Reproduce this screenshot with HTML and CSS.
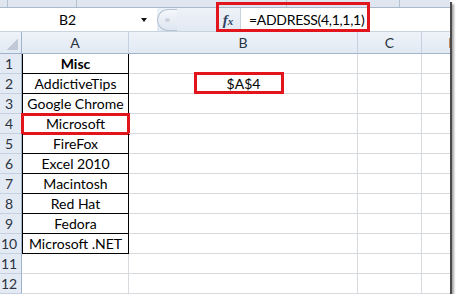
FILE: index.html
```html
<!DOCTYPE html>
<html>
<head>
<meta charset="utf-8">
<link rel="stylesheet" href="styles.css">
</head>
<body>
<div class="win">
  <div class="ribbon">
    <span class="rseg w8"></span>
    <span class="rseg w69"></span>
    <span class="rseg w210"></span>
    <span class="rseg w113"></span>
    <span class="rseg last"></span>
  </div>
  <div class="fbar">
    <div class="namebox">
      <span class="nb-text">B2</span>
      <span class="nb-arrow"></span>
    </div>
    <div class="grip"><span class="grip-cap"><span class="grip-dot"></span></span></div>
    <div class="fx"><span class="fx-f">f</span><span class="fx-x">x</span></div>
    <div class="finput">=ADDRESS(4,1,1,1)</div>
  </div>
  <div class="sheet">
    <div class="corner"><span class="tri"></span></div>
    <div class="ch">A</div>
    <div class="ch">B</div>
    <div class="ch">C</div>
    <div class="ch">D</div>

    <div class="rh">1</div><div class="c t first b">Misc</div><div class="c"></div><div class="c"></div><div class="c"></div>
    <div class="rh">2</div><div class="c t">AddictiveTips</div><div class="c"></div><div class="c"></div><div class="c"></div>
    <div class="rh">3</div><div class="c t">Google Chrome</div><div class="c"></div><div class="c"></div><div class="c"></div>
    <div class="rh">4</div><div class="c t mark">Microsoft</div><div class="c"></div><div class="c"></div><div class="c"></div>
    <div class="rh">5</div><div class="c t">FireFox</div><div class="c"></div><div class="c"></div><div class="c"></div>
    <div class="rh">6</div><div class="c t">Excel 2010</div><div class="c"></div><div class="c"></div><div class="c"></div>
    <div class="rh">7</div><div class="c t">Macintosh</div><div class="c"></div><div class="c"></div><div class="c"></div>
    <div class="rh">8</div><div class="c t">Red Hat</div><div class="c"></div><div class="c"></div><div class="c"></div>
    <div class="rh">9</div><div class="c t">Fedora</div><div class="c"></div><div class="c"></div><div class="c"></div>
    <div class="rh">10</div><div class="c t">Microsoft .NET</div><div class="c"></div><div class="c"></div><div class="c"></div>
    <div class="rh">11</div><div class="c"></div><div class="c"></div><div class="c"></div><div class="c"></div>
    <div class="rh">12</div><div class="c"></div><div class="c"></div><div class="c"></div><div class="c"></div>
  </div>
  <div class="result">$A$4</div>
  <div class="hl hl-formula"></div>
  <div class="hl hl-result"></div>
</div>
</body>
</html>
```

FILE: styles.css
```css
* { box-sizing: border-box; }
html, body { margin: 0; padding: 0; background: #fff; }
body { font-family: Lato, "Open Sans", sans-serif; }

.win {
  position: relative;
  width: 450px;
  height: 294px;
  overflow: hidden;
  background: #fff;
  box-shadow: 2px 2px 0 #4a4a4a, 4px 4px 2px rgba(0,0,0,.35);
}

/* ribbon remnant */
.ribbon {
  display: flex;
  height: 8px;
  background: #dfe6ef;
  border-bottom: 1px solid #a9b8ca;
}
.rseg { height: 100%; border-right: 1px solid #b4c1d1; }
.w8 { width: 8px; }
.w69 { width: 69px; }
.w210 { width: 210px; }
.w113 { width: 113px; }
.rseg.last { flex: 1; border-right: 0; }

/* formula bar */
.fbar {
  display: flex;
  height: 24px;
  border-bottom: 1px solid #c8d3e0;
  font-size: 14px;
  color: #000;
}
.namebox {
  display: flex;
  align-items: center;
  width: 157px;
  background: #fff;
}
.nb-text { width: 135px; text-align: center; }
.nb-arrow {
  margin-left: 6px;
  width: 0; height: 0;
  border-left: 3.5px solid transparent;
  border-right: 3.5px solid transparent;
  border-top: 4px solid #111;
}
.grip {
  display: flex;
  align-items: center;
  width: 59px;
  background: linear-gradient(#eef2f8, #e2e9f3);
}
.grip-cap {
  display: flex;
  align-items: center;
  width: 20px;
  height: 22px;
  border: 1px solid #b7c4d5;
  border-right: 0;
  border-radius: 11px 0 0 11px;
  background: linear-gradient(#f4f7fb, #dfe6f0);
}
.grip-dot {
  margin-left: 7px;
  width: 5px; height: 4px;
  border-radius: 50%;
  background: #c9d3df;
}
.fx {
  display: flex;
  align-items: baseline;
  justify-content: center;
  width: 24px;
  padding-top: 2px;
  background: linear-gradient(#eef2f8, #e2e9f3);
  color: #2f4262;
  font-family: "Liberation Serif", "DejaVu Serif", serif;
  font-style: italic;
  font-weight: bold;
}
.fx-f { font-size: 15px; line-height: 20px; }
.fx-x { font-size: 11px; }
.finput {
  flex: 1;
  display: flex;
  align-items: center;
  padding-left: 8px;
  background: #fff;
  border-left: 1px solid #c8d3e0;
  font-size: 14px;
  letter-spacing: -0.3px;
}

/* sheet */
.sheet {
  display: grid;
  grid-template-columns: 22px 107px 229px 64px 64px;
  grid-template-rows: 22px repeat(12, 20px);
  font-size: 14px;
  line-height: 19px;
}
.corner, .ch, .rh {
  background: linear-gradient(#eef3f9, #e1e9f3);
  color: #2b3340;
}
.corner {
  position: relative;
  border-right: 1px solid #9fb3cb;
  border-bottom: 1px solid #9fb3cb;
}
.tri {
  position: absolute;
  right: 3px; bottom: 3px;
  width: 11px; height: 11px;
  background: linear-gradient(to bottom right, transparent 50%, #c0c9d5 50%);
}
.ch {
  display: flex;
  align-items: center;
  justify-content: center;
  border-right: 1px solid #c5d1e0;
  border-bottom: 1px solid #9fb3cb;
}
.rh {
  display: flex;
  align-items: center;
  justify-content: center;
  padding-right: 3px;
  border-right: 1px solid #9fb3cb;
  border-bottom: 1px solid #c5d1e0;
  background: #e3eaf4;
}
.c {
  border-right: 1px solid #d6d9de;
  border-bottom: 1px solid #d6d9de;
  text-align: center;
  white-space: nowrap;
  color: #000;
}
.c.t {
  border-left: 1px solid #000;
  border-right: 1px solid #000;
  border-bottom: 1px solid #000;
}
.c.b { font-weight: bold; }
.c.mark {
  outline: 3px solid #e2141c;
  outline-offset: -2px;
}

.result {
  position: absolute;
  left: 129px;
  top: 74px;
  width: 229px;
  height: 19px;
  font-size: 14px;
  line-height: 19px;
  text-align: center;
  color: #000;
}

.hl {
  position: absolute;
  border: 3px solid #e2141c;
}
.hl-formula { left: 216px; top: 2px; width: 154px; height: 30px; }
.hl-result { left: 194px; top: 72px; width: 90px; height: 22px; }
```
